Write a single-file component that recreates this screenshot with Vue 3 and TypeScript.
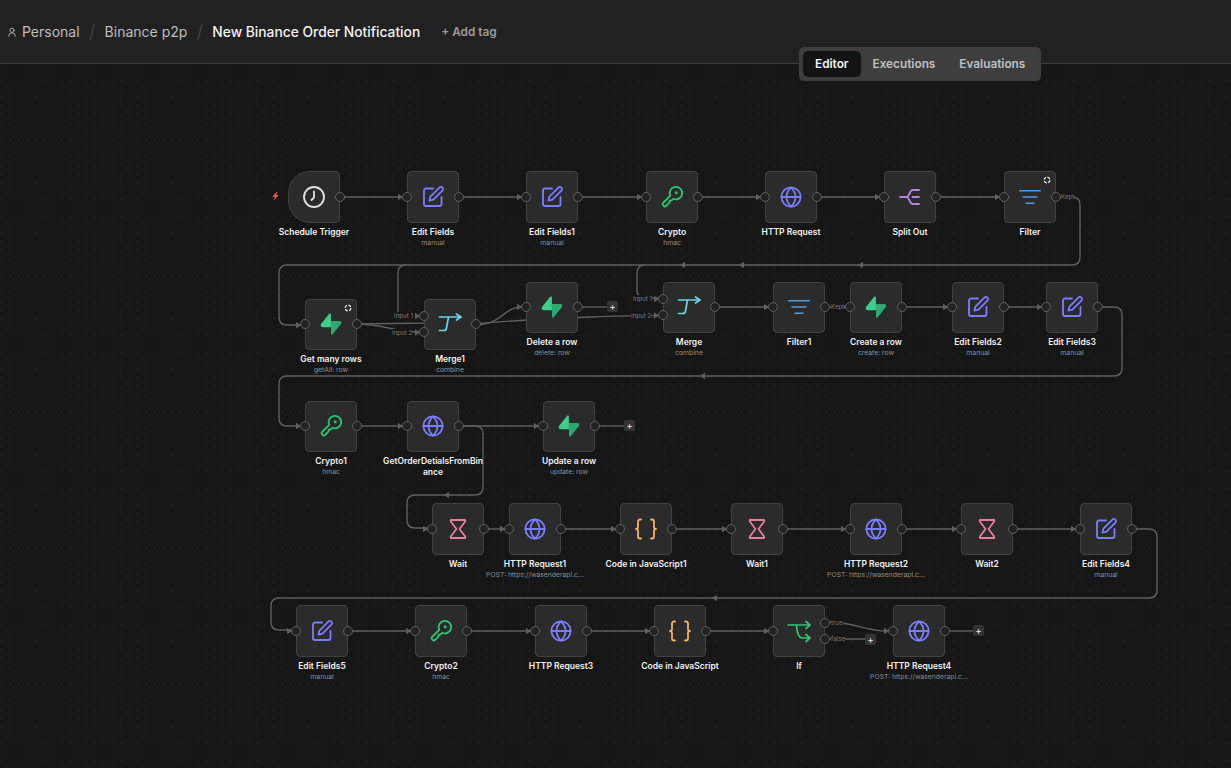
<script setup lang="ts">
type IconName = 'clock' | 'pen' | 'key' | 'globe' | 'split' | 'filter' | 'bolt' | 'merge' | 'wait' | 'code' | 'if'

interface FlowNode {
  id: string
  label: string
  sub?: string
  icon: IconName
  x: number
  y: number
  trigger?: boolean
  refresh?: boolean
  inputs?: number[]
  outputs?: number[]
}

const MID = 25.75
const TOP = 64

const nodes: FlowNode[] = [
  { id: 'a1', label: 'Schedule Trigger', icon: 'clock', x: 288, y: 171, trigger: true },
  { id: 'a2', label: 'Edit Fields', sub: 'manual', icon: 'pen', x: 407, y: 171 },
  { id: 'a3', label: 'Edit Fields1', sub: 'manual', icon: 'pen', x: 526, y: 171 },
  { id: 'a4', label: 'Crypto', sub: 'hmac', icon: 'key', x: 646, y: 171 },
  { id: 'a5', label: 'HTTP Request', icon: 'globe', x: 765, y: 171 },
  { id: 'a6', label: 'Split Out', icon: 'split', x: 884, y: 171 },
  { id: 'a7', label: 'Filter', icon: 'filter', x: 1004, y: 171, refresh: true },
  { id: 'b1', label: 'Get many rows', sub: 'getAll: row', icon: 'bolt', x: 305, y: 298.5, refresh: true },
  { id: 'b2', label: 'Merge1', sub: 'combine', icon: 'merge', x: 424, y: 298.5, inputs: [17, 33.5] },
  { id: 'b3', label: 'Delete a row', sub: 'delete: row', icon: 'bolt', x: 526, y: 281.5 },
  { id: 'b4', label: 'Merge', sub: 'combine', icon: 'merge', x: 663, y: 281.5, inputs: [17, 33.5] },
  { id: 'b5', label: 'Filter1', icon: 'filter', x: 773, y: 281.5 },
  { id: 'b6', label: 'Create a row', sub: 'create: row', icon: 'bolt', x: 850, y: 281.5 },
  { id: 'b7', label: 'Edit Fields2', sub: 'manual', icon: 'pen', x: 952, y: 281.5 },
  { id: 'b8', label: 'Edit Fields3', sub: 'manual', icon: 'pen', x: 1046, y: 281.5 },
  { id: 'c1', label: 'Crypto1', sub: 'hmac', icon: 'key', x: 305, y: 400.5 },
  { id: 'c2', label: 'GetOrderDetialsFromBinance', icon: 'globe', x: 407, y: 400.5 },
  { id: 'c3', label: 'Update a row', sub: 'update: row', icon: 'bolt', x: 543, y: 400.5 },
  { id: 'd1', label: 'Wait', icon: 'wait', x: 432, y: 503 },
  { id: 'd2', label: 'HTTP Request1', sub: 'POST: https://wasenderapi.c...', icon: 'globe', x: 509, y: 503 },
  { id: 'd3', label: 'Code in JavaScript1', icon: 'code', x: 620, y: 503 },
  { id: 'd4', label: 'Wait1', icon: 'wait', x: 731, y: 503 },
  { id: 'd5', label: 'HTTP Request2', sub: 'POST: https://wasenderapi.c...', icon: 'globe', x: 850, y: 503 },
  { id: 'd6', label: 'Wait2', icon: 'wait', x: 961, y: 503 },
  { id: 'd7', label: 'Edit Fields4', sub: 'manual', icon: 'pen', x: 1080, y: 503 },
  { id: 'e1', label: 'Edit Fields5', sub: 'manual', icon: 'pen', x: 296, y: 605 },
  { id: 'e2', label: 'Crypto2', sub: 'hmac', icon: 'key', x: 415, y: 605 },
  { id: 'e3', label: 'HTTP Request3', icon: 'globe', x: 535, y: 605 },
  { id: 'e4', label: 'Code in JavaScript', icon: 'code', x: 654, y: 605 },
  { id: 'e5', label: 'If', icon: 'if', x: 773, y: 605, outputs: [17.5, 34] },
  { id: 'e6', label: 'HTTP Request4', sub: 'POST: https://wasenderapi.c...', icon: 'globe', x: 893, y: 605 },
]

const edges: string[] = [
  'M339 197H403', 'M458 197H522', 'M578 197H642', 'M697 197H761', 'M816 197H880', 'M936 197H1000',
  'M1055 197H1072Q1080 197 1080 205V257Q1080 265 1072 265H287Q279 265 279 273V317Q279 325 287 325H301',
  'M406 265Q398 265 398 273V312',
  'M645 265Q637 265 637 273V290Q637 298 645 298H659',
  'M356 324L430 323',
  'M356 324C385 324 392 332 420 332',
  'M475 325C502 325 503 307 522 307',
  'M475 324Q530 319 590 317T659 316',
  'M577 307H607',
  'M714 307H769', 'M824 307H846', 'M902 307H948', 'M1004 307H1042',
  'M1097 307H1114Q1122 307 1122 315V368Q1122 376 1114 376H287Q279 376 279 384V418Q279 426 287 426H301',
  'M356 426H403', 'M458 426H539', 'M595 426H625',
  'M458 426H475Q483 426 483 434V487Q483 495 475 495H415Q407 495 407 503V520Q407 528 415 528H428',
  'M483 529H505', 'M560 529H616', 'M671 529H727', 'M782 529H846', 'M901 529H957', 'M1012 529H1076',
  'M1132 529H1149Q1157 529 1157 537V590Q1157 598 1149 598H279Q271 598 271 606V622Q271 630 279 630H292',
  'M347 631H411', 'M467 631H531', 'M586 631H650', 'M705 631H769',
  'M825 622C860 622 860 631 889 631',
  'M825 639H866',
  'M944 631H974',
]

// tip x, y, and direction of travel
const arrows: [number, number, 1 | -1][] = [
  [403, 197, 1], [522, 197, 1], [642, 197, 1], [761, 197, 1], [880, 197, 1], [1000, 197, 1],
  [680, 265, -1], [739, 265, -1], [858, 265, -1],
  [301, 325, 1], [420, 316, 1], [420, 332.5, 1], [522, 307, 1],
  [659, 299, 1], [659, 315.5, 1], [769, 307, 1], [846, 307, 1], [948, 307, 1], [1042, 307, 1],
  [700, 376, -1], [301, 426, 1], [403, 426, 1], [539, 426, 1],
  [444, 495, -1], [428, 529, 1], [505, 529, 1], [616, 529, 1], [727, 529, 1], [846, 529, 1], [957, 529, 1], [1076, 529, 1],
  [712, 598, -1], [292, 631, 1], [411, 631, 1], [531, 631, 1], [650, 631, 1], [769, 631, 1], [889, 631, 1],
]

const plusButtons = [
  { x: 607, y: 301 }, { x: 624, y: 420 }, { x: 865, y: 634 }, { x: 973, y: 625 },
]

const edgeLabels = [
  { text: 'Input 1', x: 394, y: 315.5 }, { text: 'Input 2', x: 392, y: 332.5 },
  { text: 'Input 1', x: 633, y: 298.5 }, { text: 'Input 2', x: 631, y: 315.5 },
  { text: 'Kept', x: 1061, y: 197 }, { text: 'Kept', x: 831, y: 307 },
  { text: 'true', x: 831, y: 623 }, { text: 'false', x: 831, y: 639 },
]

const arrowPoints = ([x, y, d]: [number, number, 1 | -1]) =>
  `${x},${y} ${x - 5 * d},${y - 3.2} ${x - 5 * d},${y + 3.2}`

const tabs = ['Editor', 'Executions', 'Evaluations']
</script>

<template>
  <div class="page">
    <header class="topbar">
      <svg class="user" viewBox="0 0 24 24" fill="none" stroke="currentColor" stroke-width="2" stroke-linecap="round">
        <circle cx="12" cy="8" r="5" />
        <path d="M4 22a8 8 0 0 1 16 0" />
      </svg>
      <span class="crumb">Personal</span>
      <span class="slash">/</span>
      <span class="crumb">Binance p2p</span>
      <span class="slash">/</span>
      <span class="title">New Binance Order Notification</span>
      <span class="add-tag">+ Add tag</span>
    </header>

    <div class="tabs">
      <div v-for="(tab, i) in tabs" :key="tab" class="tab" :class="{ active: i === 0 }">{{ tab }}</div>
    </div>

    <main class="canvas">
      <svg class="edges" width="1231" height="704" viewBox="0 64 1231 704">
        <path v-for="d in edges" :key="d" :d="d" fill="none" stroke="#5f5f5f" stroke-width="1.4" />
        <polygon v-for="a in arrows" :key="a.join()" :points="arrowPoints(a)" fill="#5f5f5f" />
      </svg>

      <span
        v-for="l in edgeLabels"
        :key="l.text + l.x"
        class="edge-label"
        :style="{ left: l.x + 'px', top: l.y - TOP + 'px' }"
      >{{ l.text }}</span>

      <svg class="bolt-trigger" viewBox="0 0 24 24" fill="#e5584f">
        <path d="M15 1 3 14h7l-2 9 13-14h-7l3-8z" />
      </svg>

      <div
        v-for="n in nodes"
        :key="n.id"
        class="node-wrap"
        :style="{ left: n.x + 'px', top: n.y - TOP + 'px' }"
      >
        <div class="node" :class="{ trigger: n.trigger }">
          <svg class="icon" viewBox="0 0 24 24" fill="none" stroke-width="1.8" stroke-linecap="round" stroke-linejoin="round">
            <g v-if="n.icon === 'clock'" stroke="#e2e2e2">
              <circle cx="12" cy="12" r="10" />
              <path d="M12 6.5v6l-2.5 2.5" />
            </g>
            <g v-else-if="n.icon === 'pen'" stroke="#7a7dff">
              <path d="M12 3.5H5a2 2 0 0 0-2 2V19a2 2 0 0 0 2 2h13.5a2 2 0 0 0 2-2v-7" />
              <path d="M18.4 2.6a2.1 2.1 0 0 1 3 3l-9 9-4 1 1-4z" />
            </g>
            <g v-else-if="n.icon === 'key'" stroke="#2fc572">
              <path d="M10.2 10.8A6.3 6.3 0 1 1 13.2 13.8L11.4 15.6H9.6V17.4L6 21Q5 22 3.8 21L3 20.2Q2 19 3 18Z" />
              <circle cx="16.2" cy="7.8" r=".6" />
            </g>
            <g v-else-if="n.icon === 'globe'" stroke="#7a7dff">
              <circle cx="12" cy="12" r="9.6" />
              <path d="M2.4 12h19.2M12 2.4c-6 6-6 13.2 0 19.2M12 2.4c6 6 6 13.2 0 19.2" />
            </g>
            <g v-else-if="n.icon === 'split'" stroke="#b287e0">
              <path d="M2 12h6.5Q10 12 11 9.5L12.5 6.5Q13.2 5 15 5H21M8.5 12Q10 12 11 14.5L12.5 17.5Q13.2 19 15 19H21M14.5 12H21" />
            </g>
            <g v-else-if="n.icon === 'filter'" stroke="#4b9de3" stroke-width="1.5" stroke-linecap="butt">
              <path d="M1.2 5.7h21.6M4.5 12h15M7.5 18.2h9" />
            </g>
            <g v-else-if="n.icon === 'bolt'" transform="translate(1.6 1.4) scale(.19)" stroke="none">
              <path fill="#2fa874" d="M63.708 110.284c-2.86 3.601-8.658 1.628-8.727-2.97l-1.007-67.251h45.22c8.19 0 12.758 9.46 7.665 15.874L63.708 110.284z" />
              <path fill="#3ecf8e" d="M45.317 2.071c2.86-3.601 8.657-1.628 8.726 2.97l.442 67.251H9.831c-8.19 0-12.759-9.46-7.665-15.875L45.317 2.072z" />
            </g>
            <g v-else-if="n.icon === 'merge'" stroke="#6ad3e6" stroke-width="1.7">
              <path d="M1.5 5H23M18.5 2 23 5l-4.500 3M10.500 5 8.500 16Q8 18.500 6 18.500H1.500" />
            </g>
            <g v-else-if="n.icon === 'wait'" stroke="#e57f9a">
              <path d="M4.8 3h14.4v1.500L13.500 12l5.700 7.500V21H4.800v-1.500L10.500 12 4.800 4.500z" />
            </g>
            <g v-else-if="n.icon === 'code'" stroke="#f5b25f">
              <path d="M7 2.500H6a2 2 0 0 0-2 2V10a2 2 0 0 1-2 2 2 2 0 0 1 2 2v5.500a2 2 0 0 0 2 2h1" />
              <path d="M17 2.500h1a2 2 0 0 1 2 2V10a2 2 0 0 0 2 2 2 2 0 0 0-2 2v5.500a2 2 0 0 1-2 2h-1" />
            </g>
            <g v-else stroke="#2fc572" stroke-width="1.7">
              <path d="M1 6h22M19 2.500 23 6l-4 3.500M9.500 6Q10 18 15 19h8M19 15.500l4 3.500-4 3.500" />
            </g>
          </svg>

          <svg v-if="n.refresh" class="refresh" viewBox="0 0 10 10" fill="none" stroke="#e8e8e8" stroke-width="1.6">
            <circle cx="5" cy="5" r="3.6" stroke-dasharray="4 1.65" />
          </svg>

          <template v-if="!n.trigger">
            <i
              v-for="y in n.inputs ?? [MID]"
              :key="y"
              class="port in"
              :style="{ top: y + 'px' }"
            />
          </template>
          <i
            v-for="y in n.outputs ?? [MID]"
            :key="y"
            class="port out"
            :style="{ top: y + 'px' }"
          />
        </div>
        <div class="label">{{ n.label }}</div>
        <div v-if="n.sub" class="sub">{{ n.sub }}</div>
      </div>

      <div
        v-for="p in plusButtons"
        :key="p.x"
        class="plus"
        :style="{ left: p.x + 'px', top: p.y - TOP + 'px' }"
      >+</div>
    </main>
  </div>
</template>

<style>
html,
body {
  margin: 0;
  background: #161616;
}
</style>

<style scoped>
.page {
  position: relative;
  display: flex;
  flex-direction: column;
  width: 1231px;
  height: 768px;
  overflow: hidden;
  font-family: Inter, "Liberation Sans", sans-serif;
  background: #161616;
}

.topbar {
  display: flex;
  align-items: center;
  height: 63px;
  padding-left: 7px;
  background: #212121;
  border-bottom: 1px solid #3d3d3d;
  flex-shrink: 0;
}

.user {
  width: 10px;
  height: 10px;
  margin-right: 5px;
  color: #c4c4c4;
}

.crumb {
  font-size: 14px;
  color: #bdbdbd;
}

.slash {
  width: 25px;
  text-align: center;
  font-size: 18px;
  font-weight: 300;
  color: #474747;
}

.title {
  font-size: 13.8px;
  font-weight: 500;
  color: #f2f2f2;
}

.add-tag {
  margin-left: 21px;
  font-size: 11.8px;
  font-weight: 600;
  color: #9b9b9b;
}

.tabs {
  position: absolute;
  z-index: 5;
  left: 799px;
  top: 47px;
  display: flex;
  align-items: center;
  height: 34px;
  padding: 0 4px;
  border-radius: 5px;
  background: #3e3e3e;
}

.tab {
  padding: 0 12px;
  line-height: 26px;
  font-size: 11.8px;
  font-weight: 600;
  color: #c0c0c0;
  border-radius: 5px;
}

.tab.active {
  color: #f4f4f4;
  background: #141414;
}

.canvas {
  position: relative;
  flex: 1;
  background-color: #161616;
  background-image: radial-gradient(circle, #2e2e2e 0.5px, transparent 0.9px);
  background-size: 8.5px 8.5px;
  background-position: -2.45px 3.75px;
}

.edges {
  position: absolute;
  left: 0;
  top: 0;
}

.edge-label {
  position: absolute;
  transform: translateY(-50%);
  font-size: 6.2px;
  line-height: 8px;
  color: #7c7c7c;
  background: #161616;
}

.bolt-trigger {
  position: absolute;
  left: 271px;
  top: 127px;
  width: 9px;
  height: 10px;
}

.node-wrap {
  position: absolute;
  width: 51.5px;
}

.node {
  position: relative;
  display: flex;
  align-items: center;
  justify-content: center;
  box-sizing: border-box;
  width: 51.5px;
  height: 51.5px;
  background: #2b2b2b;
  border: 1px solid #414141;
  border-radius: 4px;
}

.node.trigger {
  border-radius: 22px 4px 4px 22px;
}

.icon {
  width: 24px;
  height: 24px;
}

.refresh {
  position: absolute;
  right: 4px;
  top: 4px;
  width: 8px;
  height: 8px;
}

.port {
  position: absolute;
  box-sizing: border-box;
  width: 10px;
  height: 10px;
  margin-top: -6px;
  border: 1px solid #5f5f5f;
  border-radius: 50%;
  background: #232323;
}

.port.in {
  left: -6px;
}

.port.out {
  right: -6px;
}

.label {
  position: relative;
  left: -24px;
  width: 100px;
  margin-top: 4px;
  text-align: center;
  overflow-wrap: anywhere;
  font-size: 8.5px;
  line-height: 11px;
  font-weight: 600;
  color: #f2f2f2;
}

.sub {
  position: relative;
  left: -34px;
  width: 120px;
  text-align: center;
  white-space: nowrap;
  font-size: 6.8px;
  line-height: 10px;
  color: #8d8d8d;
}

.plus {
  position: absolute;
  display: flex;
  align-items: center;
  justify-content: center;
  width: 11px;
  height: 11px;
  font-size: 9px;
  font-weight: 600;
  color: #dcdcdc;
  border-radius: 2px;
  background: #333333;
}
</style>
